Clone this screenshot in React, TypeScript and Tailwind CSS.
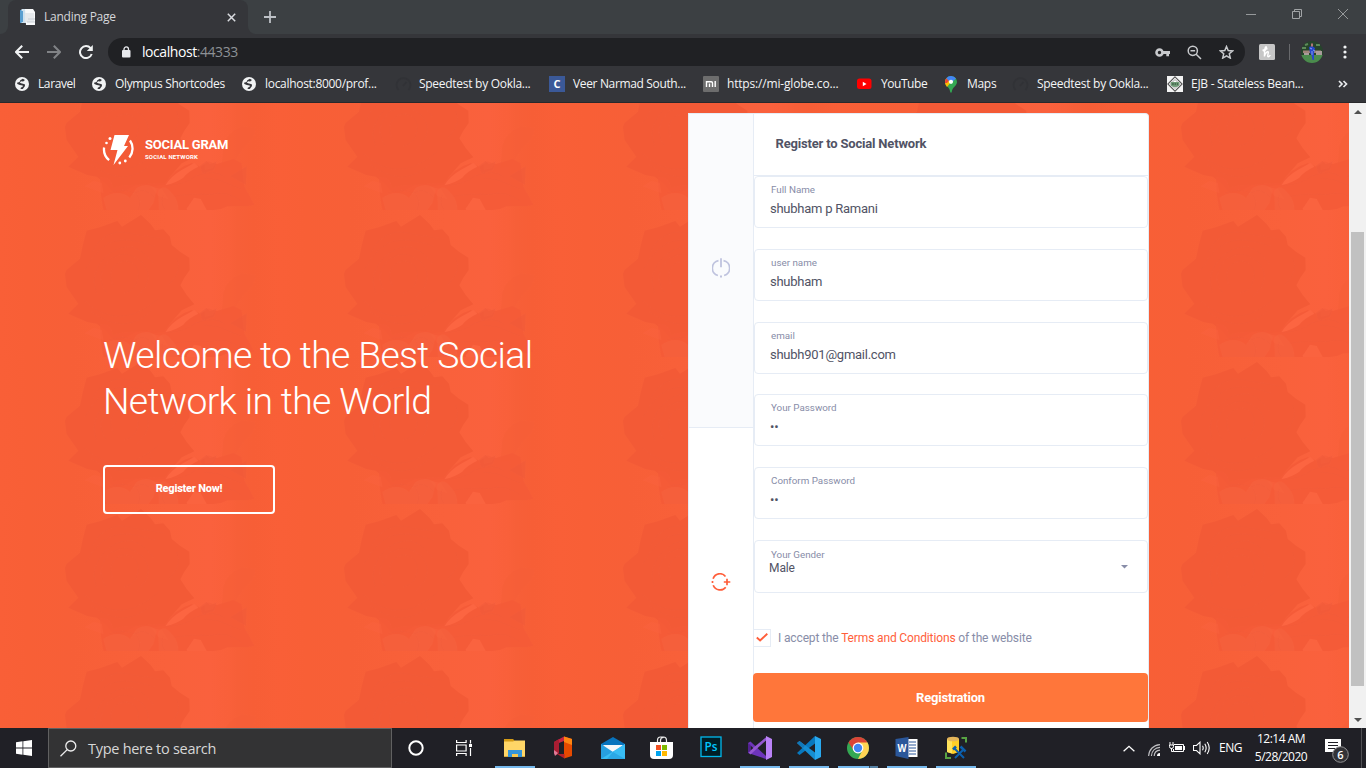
import type { ReactNode } from "react";

const ui = "font-['Open_Sans','Noto_Sans',sans-serif]";

function Globe() {
  return (
    <svg width="14" height="14" viewBox="0 0 14 14" className="block">
      <circle cx="7" cy="7" r="7" fill="#f1f3f4" />
      <path d="M7.800 1.700 10 3 8.200 4.600 6 4.300 4.800 5.800 7 6.400 9.800 7.200 10 9 7.800 11.900 5.600 12.100 5.800 10.800 7.900 9.600 7.700 8.400 4.800 7.900 2.400 7 2 5.800 4.500 5 5.300 3.200z" fill="#35363a" />
    </svg>
  );
}

function Gauge() {
  return (
    <svg width="17" height="17" viewBox="0 0 17 17" fill="none" stroke="#313236" strokeWidth="1.700">
      <path d="M3.500 14A7 7 0 1 1 13.500 14M8 10l3.500-4" />
    </svg>
  );
}

const bookmarks: { label: string; cls: string; text: string; icon: ReactNode }[] = [
  { label: "Laravel", cls: "w-[77px] gap-[9px]", text: "tracking-[-0.4px]", icon: <Globe /> },
  { label: "Olympus Shortcodes", cls: "w-[150px] gap-[9px]", text: "tracking-[-0.35px]", icon: <Globe /> },
  { label: "localhost:8000/prof...", cls: "w-[153px] gap-[9px]", text: "tracking-[-0.3px]", icon: <Globe /> },
  { label: "Speedtest by Ookla...", cls: "w-[154px] gap-[7px]", text: "tracking-[-0.28px]", icon: <Gauge /> },
  {
    label: "Veer Narmad South...", cls: "w-[154px] gap-[8px]", text: "tracking-[-0.35px]",
    icon: <span className="flex h-4 w-4 items-center justify-center bg-[#3b5998] text-[11px] font-bold text-white">C</span>,
  },
  {
    label: "https://mi-globe.co...", cls: "w-[154px] gap-[8px]", text: "tracking-[-0.18px]",
    icon: (
      <svg width="16" height="16" viewBox="0 0 16 16">
        <rect width="16" height="16" rx="1" fill="#6d6d6d" />
        <path d="M3.500 11V5.700h4.700q1.300 0 1.300 1.300V11M6.500 7.500V11M12.200 5V11" fill="none" stroke="#fff" strokeWidth="1.400" />
      </svg>
    ),
  },
  {
    label: "YouTube", cls: "w-[88px] gap-[9px]", text: "tracking-[-0.45px]",
    icon: (
      <svg width="15" height="12" viewBox="0 0 15 12">
        <rect y=".5" width="14.500" height="10.500" rx="2.500" fill="#f00" />
        <path d="M5.800 3.700v4.500L9.500 6z" fill="#fff" />
      </svg>
    ),
  },
  {
    label: "Maps", cls: "w-[67px] gap-[10px]", text: "tracking-[-0.3px]",
    icon: (
      <svg width="12" height="17" viewBox="0 0 12 17">
        <path d="M6 0a6 6 0 0 1 6 6c0 4-5 5-5.300 10.500H5.300C5 11 0 10 0 6a6 6 0 0 1 6-6z" fill="#34a853" />
        <path d="M0 6a6 6 0 0 1 1.400-3.800L6 6l-4 5C.8 9.500 0 8 0 6z" fill="#fbbc04" />
        <path d="M1.400 2.200 4 4.400 2 7 .1 7A6 6 0 0 1 1.400 2.200z" fill="#ea4335" />
        <path d="M1.400 2.200A6 6 0 0 1 11 2.600L6 7z" fill="#4285f4" />
        <circle cx="6" cy="5.800" r="2.100" fill="#fff" />
      </svg>
    ),
  },
  { label: "Speedtest by Ookla...", cls: "w-[155px] gap-[8px]", text: "tracking-[-0.28px]", icon: <Gauge /> },
  {
    label: "EJB - Stateless Bean...", cls: "w-[171px] gap-[7px]", text: "tracking-[-0.27px]",
    icon: (
      <svg width="17" height="16" viewBox="0 0 17 16">
        <rect width="16" height="16" fill="#f3f3f3" />
        <path d="m8 .9 7.100 7.100L8 15.100.9 8z" fill="#fff" stroke="#555" strokeWidth="1.100" />
        <path d="m8 3.500 4.500 4.500L8 12.500 3.500 8z" fill="none" stroke="#888" strokeWidth=".8" />
        <path d="M3.800 6h8.500v3.600q-4.200 3-8.500 0z" fill="#6f9a77" />
        <path d="M5.200 8h1.500m1 0h1.200m1 0h1" stroke="#1d3425" />
      </svg>
    ),
  },
];

function Tabs() {
  return (
    <div className="flex h-[34px] bg-[#3c4043]">
      <div className="flex h-full w-2 items-end bg-[#35363a]">
        <div className="h-full w-full rounded-br-lg bg-[#3c4043]" />
      </div>
      <div className="flex w-[240px] items-center rounded-t-lg bg-[#35363a] pl-3">
        <svg width="16" height="16" viewBox="0 0 16 16">
          <path d="M0 1h5v13H0z" fill="#4b93c9" />
          <path d="M1.500 0H10v14H1.500z" fill="#cfe1ee" />
          <path d="M0 2h3v11H0z" fill="#5a9fd0" />
          <path d="M5 0h8l2 3v13H6z" fill="#f8f9fa" />
          <path d="M5 4h9v9H5z" fill="#e6e9ec" />
          <path d="M8 10h7M7 13h8" stroke="#c8ced4" />
        </svg>
        <span className={`${ui} ml-2 w-[183px] text-[12px] leading-4 tracking-[-0.25px] text-[#d5d7da]`}>Landing Page</span>
        <svg width="9" height="9" viewBox="0 0 9 9" stroke="#dadce0" strokeWidth="1.500"><path d="m.8.8 7.400 7.400m0-7.400L.8 8.200" /></svg>
      </div>
      <div className="h-full w-2 bg-[#35363a]"><div className="h-full rounded-bl-lg bg-[#3c4043]" /></div>
      <div className="flex w-[28px] items-center justify-center">
        <svg width="12" height="12" viewBox="0 0 12 12" stroke="#bdc1c6" strokeWidth="1.800"><path d="M6 0v12M0 6h12" /></svg>
      </div>
      <div className="ml-auto flex items-start gap-[36px] pr-[18px] pt-[9px]">
        <svg width="10" height="10" viewBox="0 0 10 10" stroke="#96999b"><path d="M0 5.500h10" /></svg>
        <svg width="10" height="10" viewBox="0 0 10 10" fill="none" stroke="#a1a4a6"><path d="M.5 2.500h7v7h-7zM2.500 2.500v-2h7v7h-2" /></svg>
        <svg width="10" height="10" viewBox="0 0 10 10" stroke="#96999b"><path d="m0 0 10 10M10 0 0 10" /></svg>
      </div>
    </div>
  );
}

function Toolbar() {
  return (
    <div className="flex h-9 items-center bg-[#35363a]">
      <div className="flex w-[108px] items-center gap-[18px] pl-[15px]">
        <svg width="14" height="14" viewBox="0 0 14 14" fill="none" stroke="#f1f3f4" strokeWidth="2"><path d="M14 7H1.500M7.200.8 1 7l6.200 6.200" /></svg>
        <svg width="14" height="14" viewBox="0 0 14 14" fill="none" stroke="#818386" strokeWidth="2"><path d="M0 7h12.500M6.800.8 13 7l-6.200 6.200" /></svg>
        <svg width="14" height="14" viewBox="0 0 14 14"><path d="M11.600 3.200A6 6 0 1 0 12.700 9" fill="none" stroke="#f1f3f4" strokeWidth="2" /><path d="M13.800 0v6H7.800z" fill="#f1f3f4" /></svg>
      </div>
      <div className="flex h-7 w-[1137px] items-center rounded-full bg-[#202124] pl-[14px] pr-[11px]">
        <svg width="9" height="12" viewBox="0 0 9 12"><rect y="4" width="8.500" height="7.500" rx="1" fill="#e8eaed" /><path d="M2 5V3.200a2.200 2.200 0 0 1 4.500 0V5" fill="none" stroke="#e8eaed" strokeWidth="1.300" /></svg>
        <span className={`${ui} ml-[11px] text-[14px] leading-5 tracking-[-0.43px] text-white`}>localhost<span className="tracking-[-0.45px] text-[#8d9196]">:44333</span></span>
        <div className="ml-auto flex items-center gap-[17px]">
          <svg width="15" height="9" viewBox="0 0 15 9"><circle cx="4.500" cy="4.500" r="3" fill="none" stroke="#c8cacd" strokeWidth="2.600" /><path d="M8 3h7v3h-1v2.200h-2.700V6H8z" fill="#c8cacd" /></svg>
          <svg width="15" height="15" viewBox="0 0 15 15" fill="none" stroke="#c8cacd" strokeWidth="1.500"><circle cx="5.800" cy="5.800" r="4.600" /><path d="m9.200 9.200 4.800 4.800M3.500 5.800h4.600" /></svg>
          <svg width="15" height="14" viewBox="0 0 15 14" fill="none" stroke="#c8cacd" strokeWidth="1.500"><path d="m7.500 1.500 1.700 4 4.400.4-3.300 2.900 1 4.300-3.800-2.300-3.800 2.300 1-4.300L1.400 5.900l4.400-.4z" /></svg>
        </div>
      </div>
      <svg className="ml-[14px]" width="16" height="16" viewBox="0 0 16 16"><rect width="16" height="16" rx="1.500" fill="#c6c6c6" /><path d="M4.500 7.500C7.500 6 8 3 7 2.800 6 2.700 5.600 5 5.400 12.500 6 9 9.200 6.200 9.300 8.300c0 1.500-1.300 4.500 0 4.400.8-.1 1.500-.8 2-1.700M3.500 6.500l5-2" fill="none" stroke="#fff" strokeWidth="1.400" /></svg>
      <div className="ml-[14px] h-4 w-px bg-[#68696c]" />
      <svg className="ml-[11px]" width="22" height="22" viewBox="0 0 22 22">
        <defs><clipPath id="avatar"><circle cx="11" cy="11" r="11" /></clipPath></defs>
        <g clipPath="url(#avatar)">
          <path d="M0 0h22v22H0z" fill="#26442b" /><path d="M0 14h22v8H0z" fill="#4b8b4d" />
          <path d="M2 9.500h18V12H2z" fill="#a0857b" /><path d="M3 12h5v2H3zM15 10h6v4h-6z" fill="#a99c9c" />
          <path d="m8 6 3-1 3 2-1 5v7h-1.500L10.500 14 9 12z" fill="#2746cc" /><path d="m10 2.500 2 0v3h-2z" fill="#b07775" /><path d="m9 7 2 1m1 1 2 1M11 10v4" stroke="#849ff0" />
          <path d="M1 7h4M15 4h4M4 4l3-1" stroke="#5d8a5a" strokeWidth="2" />
        </g>
      </svg>
      <svg className="ml-[20px]" width="4" height="14" viewBox="0 0 4 14" fill="#f1f3f4"><circle cx="2" cy="2" r="1.600" /><circle cx="2" cy="7" r="1.600" /><circle cx="2" cy="12" r="1.600" /></svg>
    </div>
  );
}

function Browser() {
  return (
    <header className="h-[103px] w-full">
      <Tabs />
      <Toolbar />
      <nav className={`${ui} flex h-[33px] items-center border-b border-[#29292c] bg-[#35363a] pb-[4px] pl-[15px] text-[12px] leading-4 text-[#f4f5f6]`}>
        {bookmarks.map((b, i) => (
          <div key={i} className={`${b.cls} flex shrink-0 items-center whitespace-nowrap`}>
            <span className="shrink-0">{b.icon}</span>
            <span className={b.text}>{b.label}</span>
          </div>
        ))}
        <svg width="10" height="8" viewBox="0 0 10 8" fill="none" stroke="#e8eaed" strokeWidth="1.700"><path d="m1 1 3 3-3 3M5.500 1l3 3-3 3" /></svg>
      </nav>
    </header>
  );
}

function Roses() {
  return (
    <svg className="absolute inset-0 h-full w-full" preserveAspectRatio="none" aria-hidden="true">
      <defs>
        <linearGradient id="tone" x1="0" x2="1" y1="0" y2="0">
          <stop offset="0" stopColor="#f95f37" /><stop offset=".1" stopColor="#f85f36" /><stop offset=".25" stopColor="#f75f37" />
          <stop offset=".6" stopColor="#f9613b" /><stop offset=".75" stopColor="#fa613d" /><stop offset=".82" stopColor="#f9603a" /><stop offset=".85" stopColor="#f75f38" /><stop offset=".91" stopColor="#f75e36" /><stop offset="1" stopColor="#f95f37" />
        </linearGradient>
        <pattern id="rose" patternUnits="userSpaceOnUse" width="279" height="147" y="107">
          <g transform="scale(.33333)">
            <path d="M0 0h837v441H0z" fill="url(#tone)" />
            <path d="m423 15 29 27 13 19 25-3 20 22 5 25 25 20 28 18 1 37-17 25-11 21 19 29 23 28-38 18-35 40-15 25-50 6-35-6-30 15-30 20-35-40-25-20-28-5-57-25 30-30-35-50-5-40 5-11 40-34 10-46 10-38 40-10 52-19 14 17z" fill="#f35a36" />
            <g fill="none" stroke="#ee5938" strokeWidth="3" opacity=".22">
              <path d="M275 126q40-70 105-58t115 20M255 180q45-80 95-88t115 18M290 250q-25-70 40-120 70-50 130 30M320 250q-40-60 15-105 45-30 90 10 45 50-15 105M340 230q-25-50 20-75 45-10 55 30 2 55-40 63M250 270q110 100 225-5M275 305q100 75 180-4M530 145q20 40-25 80" />
            </g>
            <path d="M670 250q10-40 55-60l40 5q5 30-35 60l-35 55-30 5z" fill="#f65e37" opacity=".65" />
            <path d="M300 345q30-10 40 30 25-10 70-10 50-5 85-5 30-45 80-60 20 10 30 10l20-15 25 8 50-15 25 12 8 70 30 55-20 5h-60q-20 11-40 11H310q-10-50-10-96z" fill="#f55b37" opacity=".85" />
            <g fill="#fc6541">
              <path d="M497 366q15-26 48-45l38-21 12 11q-32 15-45 33-25 17-52 22z" />
              <path d="m560 437 22-33 20 4 18 33h-58z" opacity=".75" />
            </g>
            <g fill="#f9623d" opacity=".5">
              <path d="m255 370 25-15 25 5 5 30-40-15zM455 373l30 5 20 30-30-10zM615 300l15-10 10 10 10-5-12 20-23 5z" />
            </g>
            <path d="m600 308 20-15 10 10 20-8-8 25-35 12zM690 340l50-30-2 55z" fill="#ef5939" opacity=".5" />
            <path d="M310 405q45-30 80 0l20-30q35-20 60 5l-10 40-15 21H320zM475 385q15-25 40 5 20 20 20 51h-58z" fill="#f66440" opacity=".5" />
            <g fill="none" stroke="#e95738" strokeWidth="3" opacity=".2"><path d="M500 368q55-3 90-30 55-20 85 5M520 400q60-10 110-5 50-15 95 20M610 345l45 5 70 28M325 390q45-15 80 0 30-20 60 15M410 395q15 20 5 45M490 395q-10 25 5 45" /></g>
          </g>
        </pattern>
      </defs>
      <rect width="1349" height="625" fill="url(#rose)" />
    </svg>
  );
}

const fields = [
  { label: "Full Name", value: "shubham p Ramani" },
  { label: "user name", value: "shubham" },
  { label: "email", value: "shubh901@gmail.com" },
  { label: "Your Password", value: "••" },
  { label: "Conform Password", value: "••" },
];

function Card() {
  return (
    <section className="relative mt-[10px] flex h-[615px] w-[461px] overflow-hidden rounded-tr-[4px] border-r border-t border-[#e6ecf5] bg-white">
      <aside className="flex w-[66px] shrink-0 flex-col border-l border-r border-[#e6ecf5]">
        <div className="flex h-[314px] shrink-0 items-center justify-center border-b border-[#e6ecf5] bg-[#fafbfd] pb-[5px]">
          <svg width="18" height="20" viewBox="0 0 18 20" fill="none" stroke="#bfc3de" strokeWidth="1.800"><path d="M6.500 2.700a7.600 7.600 0 0 0-.6 14.800M11.500 2.700a7.600 7.600 0 0 1 .6 14.800M9 .3v8.900M8 18.500h2" /></svg>
        </div>
        <div className="flex h-[310px] shrink-0 items-center justify-center pb-[2px]">
          <svg width="20" height="18" viewBox="0 0 20 18" fill="none" stroke="#ff5e3a" strokeWidth="1.700"><path d="M2.100 5.800C3.800.2 11-.9 14.500 3.500M2.200 12.200c2.200 5.400 9.300 6.300 12.500 2M1.500 8v2M12.800 9h6.500M16 5.800v6.400" /></svg>
        </div>
      </aside>
      <div className="w-[394px] shrink-0">
        <h2 className="h-[62px] border-b border-[#e6ecf5] pl-[21.500px] pt-[20px] text-[13px] font-bold leading-5 tracking-[-0.18px] text-[#515365]">Register to Social Network</h2>
        <div className="flex flex-col gap-[20.800px]">
          {fields.map((f) => (
            <div key={f.label} className="h-[52px] rounded-[4px] border border-[#e6ecf5] pl-[15px]">
              <div className="ml-px mt-[7px] text-[9.800px] leading-3 text-[#888da8]">{f.label}</div>
              <div className="mt-[4px] text-[13px] leading-[18px] tracking-[-0.25px] text-[#515365]">{f.value}</div>
            </div>
          ))}
          <div className="relative h-[53px] rounded-[4px] border border-[#e6ecf5] pl-4">
            <div className="mt-[8px] text-[9.800px] leading-3 text-[#888da8]">Your Gender</div>
            <div className="-ml-[2px] text-[12px] leading-[14px] tracking-[-0.1px] text-[#515365]">Male</div>
            <svg className="absolute right-[19px] top-[24px]" width="7" height="4" viewBox="0 0 7 4"><path d="M0 0h7L3.500 3.500z" fill="#888da8" /></svg>
          </div>
        </div>
        <label className="mt-[36px] flex h-[18px] items-center text-[12px] text-[#888da8]">
          <span className="flex h-[18px] w-[17px] items-center justify-center border border-l-0 border-[#e6ecf5] pb-px pr-px">
            <svg width="12" height="9" viewBox="0 0 12 9" fill="none" stroke="#ff5e3a" strokeWidth="1.900"><path d="m.8 4.500 3.300 3L11.300.8" /></svg>
          </span>
          <span className="ml-[7px] whitespace-pre tracking-[-0.14px]">I accept the <span className="text-[#ff5e3a]">Terms and Conditions</span> of the website</span>
        </label>
        <button className="-ml-px mt-[26.500px] block h-[49px] w-[395px] rounded-[4px] bg-[#ff763a] text-[13px] font-bold tracking-[-0.2px] text-white">Registration</button>
      </div>
    </section>
  );
}

function Landing() {
  return (
    <main className="relative flex h-[625px] w-[1349px] overflow-hidden bg-[#f75f38] font-[Roboto,sans-serif]">
      <Roses />
      <section className="relative w-[688px] shrink-0 pl-[102px] pt-[30px] text-white">
        <div className="flex h-8 items-center">
          <svg className="mt-px" width="32" height="32" viewBox="0 0 32 32">
            <path d="M12.500 1H27l-5 11h4L11.500 31l4-15H8.500z" fill="#fff" />
            <path d="M2.100 13.500a14 14 0 0 0 5 12.600M28 6.500a14 14 0 0 1-.7 17" fill="none" stroke="#fff" strokeWidth="2.300" />
            <circle cx="8" cy="4.500" r="1.500" fill="#fff" /><circle cx="4.500" cy="9" r="1.300" fill="#fff" /><circle cx="17.800" cy="29" r="1.400" fill="#fff" /><circle cx="23.300" cy="27" r="1.400" fill="#fff" />
          </svg>
          <div className="ml-[11px] pb-px">
            <div className="text-[13px] font-bold leading-[15px] tracking-[-0.22px]">SOCIAL GRAM</div>
            <div className="mt-px text-[6px] font-bold leading-[8px] tracking-[0.15px]">SOCIAL NETWORK</div>
          </div>
        </div>
        <h1 className="ml-px mt-[167px] whitespace-nowrap text-[37.300px] font-light leading-[46px] tracking-[-0.630px]">Welcome to the Best Social<br />Network in the World</h1>
        <button className="ml-px mt-[41px] block h-[49px] w-[172px] rounded-[4px] border-2 border-white text-[11px] font-extrabold tracking-[-0.22px]">Register Now!</button>
      </section>
      <Card />
    </main>
  );
}

function Scrollbar() {
  return (
    <div className="flex h-[625px] w-[17px] flex-col items-center bg-[#f1f1f1]">
      <div className="flex h-[17px] items-center"><svg width="8" height="4" viewBox="0 0 8 4"><path d="m0 4 4-4 4 4z" fill="#505050" /></svg></div>
      <div className="mt-[112px] h-[454px] w-[13px] bg-[#c1c1c1]" />
      <div className="mt-auto flex h-[17px] items-center"><svg width="8" height="4" viewBox="0 0 8 4"><path d="m0 0 4 4 4-4z" fill="#505050" /></svg></div>
    </div>
  );
}

const apps: { active: boolean; icon: ReactNode }[] = [
  { active: true, icon: <><path d="M1 3h9l2 2h10v3H1z" fill="#d49b16" /><path d="M1 5.500h9L12 4.500h10V21H1z" fill="#ffd667" /><path d="M5 14h14v7h-4v-3H9v3H5z" fill="#3595d8" /><path d="M9 18h6v3H9z" fill="#f8c84e" /><path d="M1 20h4v1H1zm18 0h3v1h-3z" fill="#d7aa3c" /></> },
  { active: false, icon: <><path d="M2 6 12 .5V5L7 7v10l-3 2-2-2z" fill="#c72543" /><path d="M2 6 7 3v14l-3 2-2-2z" fill="#a81d32" /><path d="m12 .5 8 2.500v17l-8 2.500z" fill="#e64a00" /><path d="m12 .5 8 2.500v6l-8-3z" fill="#ff8512" /><path d="M5 18h7.500v4.500z" fill="#b3202c" /><path d="m2 14 4 3-3 3-1-3z" fill="#e07b98" /></> },
  { active: false, icon: <><path d="m0 8 12-7 12 7v4H0z" fill="#0873bd" /><path d="M2 9h20l-5 8H7z" fill="#f6f7f9" /><path d="m0 8 12 8 12-8v15H0z" fill="#279fe0" /><path d="m24 8-24 15h24z" fill="#39bdf4" /><path d="m12 16 12 7H6z" fill="#1689d3" opacity=".4" /></> },
  { active: false, icon: <><path d="M0 6h23v13q0 4-4 4H4q-4 0-4-4z" fill="#fff" /><path d="M7.500 6V4.500Q7.500 1 10.500 1h3q3 0 3 3.500V6M10.500 6V4.500Q10.500 1.500 13.500 1.500" fill="none" stroke="#eee" strokeWidth="1.200" /><path d="M6 9h5v5H6z" fill="#f25022" /><path d="M12 9h5v5h-5z" fill="#7fba00" /><path d="M6 15h5v5H6z" fill="#00a4ef" /><path d="M12 15h5v5h-5z" fill="#ffb900" /></> },
  { active: false, icon: <><rect x="2" y="1" width="20" height="19.500" fill="#001e26" stroke="#00b9ed" strokeWidth="1.300" /><text x="5.500" y="15" fill="#00c8ff" fontSize="12" fontFamily="Open Sans, sans-serif" fontWeight="600" textLength="13" lengthAdjust="spacingAndGlyphs">Ps</text></> },
  { active: true, icon: <><path d="M0 7 2.500 5.500 18 20v3L0 17z" fill="#6d34ba" /><path d="m2.500 18.500 15.500-14 1-4L0 16z" fill="#9558d1" /><path d="M18 7.500v9L12.500 12z" fill="#202026" /><path d="M2.500 9.500v5L5.300 12z" fill="#202026" /><path d="m0 7 2.500 2v6L0 17z" fill="#52218f" /><path d="m18 0 6 3v18l-6 3z" fill="#ba82f7" /></> },
  { active: true, icon: <><path d="M18 0v7.500L2.500 19 0 17z" fill="#0878be" /><path d="m0 7 2.500-2L18 16.500V24z" fill="#168ed2" /><path d="m18 0 6 3v18l-6 3z" fill="#29a9ef" /><path d="m0 7 2.500-2L8 9.500 6 12z" fill="#1277b8" /></> },
  { active: true, icon: <><circle cx="12" cy="12" r="11" fill="#34a853" /><path d="M2.500 6.500A11 11 0 0 1 21.500 6.500L12 12z" fill="#db4437" /><path d="M21.500 6.500A11 11 0 0 1 12 23l4.300-8.500L12 6.500z" fill="#ffd454" /><path d="m2.500 6.500 5.200 8L12 12V6.500z" fill="#db4437" /><circle cx="12" cy="12" r="5.400" fill="#fff" /><circle cx="12" cy="12" r="4.200" fill="#4285f4" /></> },
  { active: true, icon: <><path d="M12 3h10.500v18H12z" fill="#fff" /><path d="M14 6h7M14 9h7M14 12h7M14 15h7M14 18h7" stroke="#2b579a" /><path d="m.5 3 13-2v22l-13-3z" fill="#2b579a" /><text x="2.500" y="16" fill="#fff" fontSize="10" fontFamily="Open Sans, sans-serif" fontWeight="700" textLength="9" lengthAdjust="spacingAndGlyphs">W</text></> },
  { active: true, icon: <><path d="M3 3h12v13l-6 2-6-2z" fill="#ffcf28" /><path d="M3 3h5v14.500L3 16z" fill="#ffe35b" /><ellipse cx="9" cy="3" rx="6" ry="2.300" fill="#e4b55a" /><path d="M17.500 2H22v4.500M2 16.500V22h5" fill="none" stroke="#58a343" strokeWidth="2" /><path d="m10 12 10 10M20 13l-9 9" stroke="#0b5fae" strokeWidth="2" /><path d="m16.500 10.500 5 5M9 13.500l3-3" stroke="#0b5fae" strokeWidth="2.500" /></> },
];

function Taskbar() {
  return (
    <footer className={`${ui} flex h-10 w-full bg-[#202026] text-white`}>
      <div className="flex w-12 items-center justify-center">
        <svg width="16" height="16" viewBox="0 0 16 16" fill="#fff"><path d="m0 2.200 6.500-.9v6.300H0zM7.300 1.200 16 0v7.600H7.300zM0 8.400h6.500v6.300L0 13.800zM7.300 8.400H16V16l-8.700-1.200z" /></svg>
      </div>
      <div className="flex w-[344px] items-center border border-[#606061] bg-[#333334] pl-[11px]">
        <svg width="17" height="17" viewBox="0 0 17 17" fill="none" stroke="#eee" strokeWidth="1.300"><circle cx="10.800" cy="6" r="5" /><path d="M7.200 9.600.5 16.300" /></svg>
        <span className="ml-[11px] pt-px text-[14.500px] tracking-[-0.28px] text-[#d7d7d7]">Type here to search</span>
      </div>
      <div className="flex w-12 items-center justify-center"><svg width="16" height="16" viewBox="0 0 16 16"><circle cx="8" cy="8" r="6.700" fill="none" stroke="#fff" strokeWidth="2" /></svg></div>
      <div className="flex w-[50px] items-center justify-center pr-[2px]"><svg width="18" height="16" viewBox="0 0 18 16" fill="none" stroke="#fff" strokeWidth="1.200"><path d="M1.600 0v2.500h9.500V0M1.600 5h9.500v6H1.600zM1.600 16v-2.500h9.500V16M15.500 0v3.500M15.500 8v8" /><path d="M14 4h3v3h-3z" fill="#fff" stroke="none" /></svg></div>
      <div className="flex">
        {apps.map((app, i) => (
          <div key={i} className="flex h-10 w-[49px] flex-col items-center">
            <svg className="mt-[8px] shrink-0" width="24" height="24" viewBox="0 0 24 24">{app.icon}</svg>
            {app.active && <div className="mt-[6px] flex h-[2px] w-10 bg-[#76b9ed]">{i === 7 && <span className="ml-auto w-[9px] border-l border-[#354b5e] bg-[#5581a4]" />}</div>}
          </div>
        ))}
      </div>
      <div className="ml-auto flex h-full items-center">
        <svg width="12" height="7" viewBox="0 0 12 7" fill="none" stroke="#fff" strokeWidth="1.300"><path d="m.6 6.300 5.400-5 5.400 5" /></svg>
        <svg className="ml-[13px] mt-1" width="13" height="12" viewBox="0 0 13 12" fill="none"><path d="M.6 12C1 5.500 5.500 1 12 .6M3.400 12c.3-4.900 3.700-8.300 8.600-8.600M6.200 12C6.400 8.700 8.700 6.400 12 6.200" stroke="#bdbdc0" strokeWidth="1.200" /><path d="M12 9a3 3 0 0 0-3 3h3z" fill="#fff" /></svg>
        <svg className="ml-[8px]" width="16" height="12" viewBox="0 0 16 12" fill="none" stroke="#fff"><path d="M5 2.500h9.500v7h-10V7M15.500 4v4M2.500 6v3.500h2M1 0v3m3-3v3M.5 3h4v1.500q0 2-2 2t-2-2z" /><path d="M6 4h7v4H6z" fill="#fff" stroke="none" /></svg>
        <svg className="ml-[8px]" width="17" height="14" viewBox="0 0 17 14" fill="none" stroke="#fff" strokeWidth="1.100"><path d="M.5 4.500h3L7 1.200v11.600L3.500 9.500h-3zM9.500 4.800q1.400 2.200 0 4.400M11.800 2.800q2.700 4.200 0 8.400M14.200 1q4 6 0 12" /></svg>
        <span className="ml-[9px] w-[26px] text-[12px] tracking-[-0.5px]">ENG</span>
        <div className="ml-[8px] w-[56px] whitespace-nowrap text-center text-[12px] leading-[18px] tracking-[-0.5px]"><div>12:14 AM</div><div>5/28/2020</div></div>
        <svg className="ml-[15px] mt-[4px]" width="26" height="26" viewBox="0 0 26 26"><path d="M1 2h16v13h-4l-3 3v-3H1z" fill="#fff" /><path d="M4 5.500h10M4 8.500h10M4 11.500h7" stroke="#202026" /><circle cx="16.500" cy="17.500" r="7.800" fill="#333337" stroke="#929294" /><text x="16.500" y="21.500" textAnchor="middle" fill="#fff" fontSize="11" fontWeight="600">6</text></svg>
        <div className="ml-[11px] mr-[4px] h-10 w-px bg-[#505054]" />
      </div>
    </footer>
  );
}

export default function App() {
  return (
    <div className="h-[768px] w-[1366px] overflow-hidden">
      <Browser />
      <div className="flex"><Landing /><Scrollbar /></div>
      <Taskbar />
    </div>
  );
}
